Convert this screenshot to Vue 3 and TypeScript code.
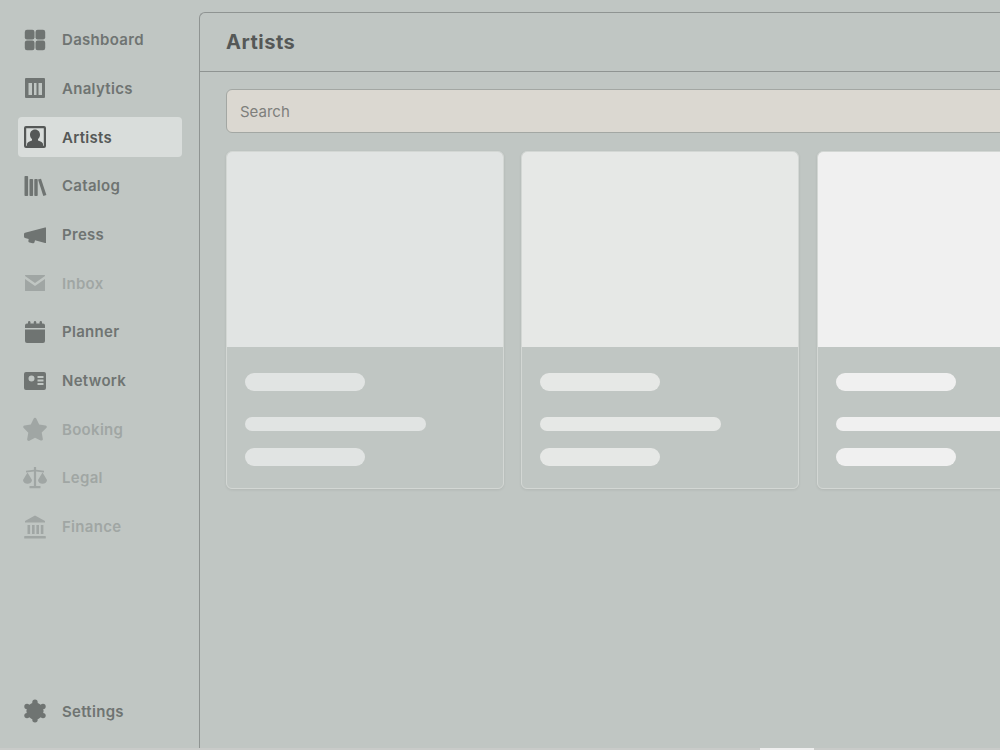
<script setup lang="ts">
type NavItem = {
  label: string
  icon: string
  active?: boolean
  muted?: boolean
}

const navItems: NavItem[] = [
  { label: 'Dashboard', icon: 'dashboard' },
  { label: 'Analytics', icon: 'analytics' },
  { label: 'Artists', icon: 'artists', active: true },
  { label: 'Catalog', icon: 'catalog' },
  { label: 'Press', icon: 'press' },
  { label: 'Inbox', icon: 'inbox', muted: true },
  { label: 'Planner', icon: 'planner' },
  { label: 'Network', icon: 'network' },
  { label: 'Booking', icon: 'booking', muted: true },
  { label: 'Legal', icon: 'legal', muted: true },
  { label: 'Finance', icon: 'finance', muted: true },
]

const cards = [
  { id: 1, shade: '#e1e4e3' },
  { id: 2, shade: '#e6e8e6' },
  { id: 3, shade: '#f0f0f0' },
]
</script>

<template>
  <div class="app">
    <aside class="sidebar">
      <nav class="nav">
        <a
          v-for="item in navItems"
          :key="item.label"
          class="navItem"
          :class="{ active: item.active, muted: item.muted }"
        >
          <svg class="navIcon" viewBox="0 0 24 24" fill="currentColor">
            <template v-if="item.icon === 'dashboard'">
              <rect x="1.8" y="1.8" width="9.7" height="9.7" rx="2.2" />
              <rect x="12.5" y="1.8" width="9.7" height="9.7" rx="2.2" />
              <rect x="1.8" y="12.5" width="9.7" height="9.7" rx="2.2" />
              <rect x="12.5" y="12.5" width="9.7" height="9.7" rx="2.2" />
            </template>
            <path
              v-else-if="item.icon === 'analytics'"
              fill-rule="evenodd"
              d="M3 2h18a1 1 0 0 1 1 1v18a1 1 0 0 1-1 1H3a1 1 0 0 1-1-1V3a1 1 0 0 1 1-1zM5.500 7v12h3.500V7zM11 7v12h2.500V7zM15.500 7v12h3.500V7z"
            />
            <template v-else-if="item.icon === 'artists'">
              <path
                fill-rule="evenodd"
                d="M3 1h18a2 2 0 0 1 2 2v18a2 2 0 0 1-2 2H3a2 2 0 0 1-2-2V3a2 2 0 0 1 2-2zm.2 2.200v17.600h17.600V3.200z"
              />
              <path d="M12 4.500c3 0 5 2.300 5 5.200 0 1.800-.8 3.400-2 4.400v1.300c2.800.8 5 2 5 3.600v2H4v-2c0-1.600 2.200-2.800 5-3.600v-1.300c-1.200-1-2-2.600-2-4.400 0-2.900 2-5.200 5-5.200z" />
            </template>
            <template v-else-if="item.icon === 'catalog'">
              <rect x="1.5" y="2" width="3.6" height="20" rx=".8" />
              <rect x="6.5" y="5" width="3.6" height="17" rx=".8" />
              <rect x="11.3" y="5" width="3.4" height="17" rx=".8" />
              <path d="M15 5.500l3-.8 5.400 16.300-3.100 1z" />
            </template>
            <path
              v-else-if="item.icon === 'press'"
              d="M22 4.500h1v15.500h-1l-10-2.800-.5 2a1.500 1.500 0 0 1-1.800 1.100l-3.200-.8a1.500 1.500 0 0 1-1.100-1.800l.3-1.700-3.700-1a1.500 1.500 0 0 1-1-1.400v-2.500a1.500 1.500 0 0 1 1-1.400z"
            />
            <template v-else-if="item.icon === 'inbox'">
              <path d="M2 4.500a.5.500 0 0 1 .5-.5h19a.5.500 0 0 1 .5.500v.5l-10 7-10-7z" />
              <path d="M2 8l10 7 10-7v11.500a.5.500 0 0 1-.5.500h-19a.5.500 0 0 1-.5-.500z" />
            </template>
            <template v-else-if="item.icon === 'planner'">
              <rect x="5" y="1" width="2.4" height="4" rx="1.2" />
              <rect x="10.8" y="1" width="2.4" height="4" rx="1.2" />
              <rect x="16.6" y="1" width="2.4" height="4" rx="1.2" />
              <path d="M4 3.500h16a2 2 0 0 1 2 2V8H2V5.500a2 2 0 0 1 2-2z" />
              <path d="M2 9.500h20V21a2 2 0 0 1-2 2H4a2 2 0 0 1-2-2z" />
            </template>
            <path
              v-else-if="item.icon === 'network'"
              fill-rule="evenodd"
              d="M3 3h18a2 2 0 0 1 2 2v14a2 2 0 0 1-2 2H3a2 2 0 0 1-2-2V5a2 2 0 0 1 2-2zm5.500 3.500a3 3 0 1 0 0 6 3 3 0 0 0 0-6zM14.500 7v2h6V7zm0 3.500v2h6v-2zm0 3.500v2h6v-2z"
            />
            <path
              v-else-if="item.icon === 'booking'"
              d="M12 .8a1.500 1.500 0 0 1 1.400.9l2.800 5.800 6.300.9a1.500 1.500 0 0 1 .8 2.600l-4.600 4.500 1.100 6.300a1.500 1.500 0 0 1-2.200 1.600L12 20.700l-5.600 3a1.500 1.500 0 0 1-2.200-1.600l1.100-6.300L.7 11a1.500 1.500 0 0 1 .8-2.600l6.300-.9 2.800-5.800A1.500 1.500 0 0 1 12 .8z"
            />
            <template v-else-if="item.icon === 'legal'">
              <path d="M10.900 1h2.200v2.700l7.900 1v1.800l-7.900-1V20h4.400v2.200H6.500V20h4.400V5.500l-7.900 1V4.700l7.900-1z" />
              <path d="M4.500 6.500L9 14c0 2.200-2 3.800-4.500 3.800S0 16.200 0 14z" />
              <path d="M19.500 6.500L24 14c0 2.200-2 3.800-4.500 3.800S15 16.200 15 14z" />
            </template>
            <template v-else-if="item.icon === 'finance'">
              <path d="M12 .5L22 6v1.500H2V6z" />
              <rect x="4.5" y="10" width="2.6" height="9" />
              <rect x="9" y="10" width="2.6" height="9" />
              <rect x="13.4" y="10" width="2.6" height="9" />
              <rect x="17.8" y="10" width="2.6" height="9" />
              <rect x="1.2" y="21" width="21.6" height="2.5" rx=".6" />
            </template>
          </svg>
          <span>{{ item.label }}</span>
        </a>
      </nav>
      <a class="navItem">
        <svg class="navIcon" viewBox="0 0 24 24" fill="currentColor">
          <circle cx="12" cy="12" r="8.6" />
          <circle cx="12" cy="3.3" r="2.7" />
          <circle cx="20" cy="7.4" r="2.7" />
          <circle cx="20" cy="16.6" r="2.7" />
          <circle cx="12" cy="20.7" r="2.7" />
          <circle cx="4" cy="16.6" r="2.7" />
          <circle cx="4" cy="7.4" r="2.7" />
        </svg>
        <span>Settings</span>
      </a>
    </aside>

    <main class="panel">
      <header class="panelHeader">
        <h1>Artists</h1>
      </header>
      <div class="panelBody">
        <input class="search" type="text" placeholder="Search" />
        <div class="cardGrid">
          <article v-for="card in cards" :key="card.id" class="card">
            <div class="cardImage" :style="{ background: card.shade }"></div>
            <div class="cardBody">
              <div class="bar wide" :style="{ background: card.shade }"></div>
              <div class="bar thin" :style="{ background: card.shade }"></div>
              <div class="bar wide last" :style="{ background: card.shade }"></div>
            </div>
          </article>
        </div>
      </div>
    </main>
    <div class="peekTab"></div>
  </div>
</template>

<style>
html,
body {
  margin: 0;
  background: #c9cbc9;
}
</style>

<style scoped>
.app {
  position: relative;
  display: flex;
  width: 1000px;
  height: 750px;
  overflow: hidden;
  background: linear-gradient(#c0c6c3 748px, #c9cbc9 748px);
  font-family: Inter, 'Liberation Sans', sans-serif;
}

.sidebar {
  flex: 0 0 199px;
  height: 748px;
  box-sizing: border-box;
  display: flex;
  flex-direction: column;
  justify-content: space-between;
  padding: 19.8px 17.5px 17px;
}

.nav {
  display: flex;
  flex-direction: column;
  gap: 8.7px;
}

.navItem {
  display: flex;
  align-items: center;
  gap: 15px;
  width: 164px;
  height: 40px;
  box-sizing: border-box;
  padding-left: 5.5px;
  border-radius: 4px;
  color: #6f7472;
  font-size: 15px;
  font-weight: 600;
  letter-spacing: 0.3px;
}

.navItem.active {
  background: #d9dddb;
  color: #555857;
}

.navItem.muted {
  color: #a0a6a4;
}

.navIcon {
  width: 24px;
  height: 24px;
  flex: none;
}

.panel {
  flex: none;
  width: 1000px;
  height: 736px;
  margin-top: 12px;
  box-sizing: border-box;
  border-top: 1px solid #8f9492;
  border-left: 1px solid #8f9492;
  border-top-left-radius: 6px;
}

.panelHeader {
  height: 59px;
  box-sizing: border-box;
  display: flex;
  align-items: center;
  padding-left: 26px;
  border-bottom: 1px solid #8f9492;
}

.panelHeader h1 {
  margin: 0;
  color: #555857;
  font-size: 20px;
  font-weight: 700;
  letter-spacing: 0.5px;
}

.panelBody {
  display: flex;
  flex-direction: column;
  gap: 18px;
  padding: 17px 26px;
}

.search {
  width: 946px;
  height: 44px;
  box-sizing: border-box;
  padding: 0 13px;
  border: 1px solid #a3a7a3;
  border-radius: 6px;
  background: #dbd8d1;
  font-family: Inter, 'Liberation Sans', sans-serif;
  font-size: 15px;
}

.search::placeholder {
  color: #7e7f7c;
  opacity: 1;
}

.cardGrid {
  display: grid;
  grid-template-columns: repeat(3, 277.6px);
  gap: 17.8px;
}

.card {
  height: 338px;
  box-sizing: border-box;
  overflow: hidden;
  border: 1px solid #d3d7d4;
  border-radius: 6px;
  box-shadow: 0 1px 3px rgba(0, 0, 0, 0.08);
}

.cardImage {
  height: 195px;
}

.cardBody {
  display: flex;
  flex-direction: column;
  padding: 26px 18px 0;
}

.bar {
  height: 18px;
  border-radius: 9px;
}

.bar.wide {
  width: 120px;
}

.bar.thin {
  width: 181px;
  height: 14px;
  margin-top: 26px;
}

.bar.last {
  margin-top: 17px;
}

/* sliver of something sitting just under the fold */
.peekTab {
  position: absolute;
  left: 760px;
  bottom: 0;
  width: 54px;
  height: 2px;
  background: #efefef;
}
</style>
